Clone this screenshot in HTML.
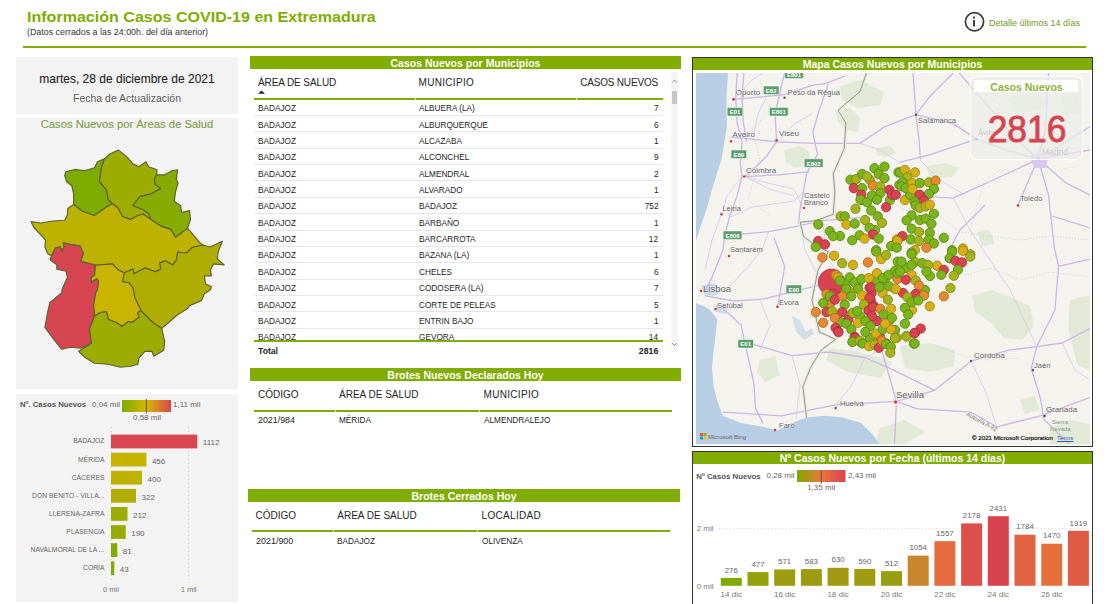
<!DOCTYPE html><html><head><meta charset="utf-8"><style>
html,body{margin:0;padding:0;width:1110px;height:604px;overflow:hidden;background:#fff;position:relative}
body{font-family:"Liberation Sans",sans-serif}
.t{position:absolute;white-space:nowrap;line-height:1}
.r{position:absolute}
svg{position:absolute;left:0;top:0}
</style></head><body>
<div class="t" style="left:27.0px;top:8.80px;font-size:15px;color:#80ad00;font-weight:700;transform:scaleX(1.07);transform-origin:0 0">Información Casos COVID-19 en Extremadura</div>
<div class="t" style="left:27.0px;top:28.47px;font-size:8.9px;color:#333;font-weight:400;">(Datos cerrados a las 24:00h. del día anterior)</div>
<div class="r" style="left:23px;top:46px;width:1063px;height:2px;background:#80ad00;"></div>
<svg width="1110" height="60" style="left:0;top:0"><circle cx="974.5" cy="21.8" r="9.1" fill="none" stroke="#3a3a3a" stroke-width="1.7"/><rect x="973.1" y="20" width="1.9" height="6.5" fill="#3a3a3a"/><rect x="973.1" y="16.5" width="1.9" height="2" fill="#3a3a3a"/></svg>
<div class="t" style="left:989.0px;top:18.98px;font-size:9px;color:#6f9a1e;font-weight:400;">Detalle últimos 14 días</div>
<div class="r" style="left:16px;top:57px;width:222px;height:57px;background:#f3f3f3;"></div>
<div class="t" style="left:-173.0px;width:600px;text-align:center;top:73.24px;font-size:12px;color:#252423;font-weight:400;-webkit-text-stroke:0.1px #252423">martes, 28 de diciembre de 2021</div>
<div class="t" style="left:-173.0px;width:600px;text-align:center;top:93.11px;font-size:10.5px;color:#605e5c;font-weight:400;">Fecha de Actualización</div>
<div class="r" style="left:16px;top:118px;width:222px;height:271px;background:#f3f3f3;"></div>
<div class="t" style="left:-173.0px;width:600px;text-align:center;top:119.48px;font-size:11.25px;color:#7f9f48;font-weight:400;-webkit-text-stroke:0.15px #7f9f48">Casos Nuevos por Áreas de Salud</div>
<div class="r" style="left:16px;top:394px;width:222px;height:208px;background:#f3f3f3;"></div>
<svg width="1110" height="400" style="left:0;top:0"><polygon points="65.7,171.8 75.6,169.4 84.6,170.8 94.5,167.8 97.5,161.8 104.4,158.9 101.5,167.8 99.5,181.7 106.4,189.6 108.4,199.6 112.4,203.5 104.4,208.5 94.5,215.5 82.6,211.5 77.6,207.5 73.6,204.5 73.6,193.6 71.7,185.7 66.7,181.7 64.7,175.7" fill="#7eab00" stroke="#5a6232" stroke-width="1.15" stroke-linejoin="round"/><polygon points="104.4,158.9 110.0,154.0 118.3,149.9 127.0,156.9 132.9,163.8 138.9,166.8 145.9,161.8 148.8,166.8 156.8,169.8 156.8,174.8 154.8,177.7 154.8,183.7 160.7,188.6 151.8,193.6 139.9,196.6 132.9,205.5 142.9,209.5 148.8,213.5 150.8,219.4 143.0,214.0 137.0,216.0 130.2,219.4 122.3,216.5 118.3,208.5 112.4,203.5 108.4,199.6 106.4,189.6 99.5,181.7 101.5,167.8" fill="#9dad00" stroke="#5a6232" stroke-width="1.15" stroke-linejoin="round"/><polygon points="156.8,174.8 164.7,174.8 171.7,170.8 177.6,169.8 176.2,179.7 178.2,182.7 175.6,191.6 174.2,201.6 180.6,205.5 181.6,212.5 189.5,210.5 190.5,219.4 187.6,228.4 175.6,237.3 170.7,229.4 161.7,226.4 150.8,219.4 148.8,213.5 142.9,209.5 132.9,205.5 139.9,196.6 151.8,193.6 160.7,188.6 154.8,183.7 154.8,177.7" fill="#87ab00" stroke="#5a6232" stroke-width="1.15" stroke-linejoin="round"/><polygon points="31.0,221.6 40.9,223.0 52.8,221.0 64.7,220.3 67.4,215.0 67.7,208.5 73.6,204.5 77.6,207.5 82.6,211.5 94.5,215.5 104.4,208.5 112.4,203.5 118.3,208.5 122.3,216.5 130.2,219.4 137.0,216.0 143.0,214.0 150.8,219.4 161.7,226.4 170.7,229.4 175.6,237.3 187.6,228.4 200.5,243.3 203.4,245.2 192.5,247.2 186.6,253.0 177.6,252.0 176.6,259.9 172.7,264.9 165.7,260.9 159.8,262.9 160.7,268.9 155.8,271.8 144.9,267.9 133.9,273.8 132.9,268.9 124.3,272.8 118.3,269.9 112.4,263.9 95.2,265.3 93.9,264.7 80.6,261.4 83.3,253.4 80.0,246.1 68.7,244.1 63.4,242.8 64.1,246.8 62.1,251.4 60.1,246.8 55.5,248.1 51.5,256.0 47.5,253.4 44.9,246.8 45.5,240.2 39.6,233.5 34.3,228.2" fill="#bdb200" stroke="#5a6232" stroke-width="1.15" stroke-linejoin="round"/><polygon points="203.4,245.2 210.0,247.0 222.3,241.3 218.3,251.2 217.3,258.9 224.3,264.9 213.4,263.9 210.4,269.9 211.4,275.8 204.4,275.8 205.4,283.8 211.4,286.7 210.4,289.7 204.4,293.7 201.5,300.6 189.5,305.6 187.5,308.6 176.6,315.5 168.7,322.5 161.7,328.4 152.8,322.5 140.9,310.6 134.9,297.7 132.9,287.7 129.0,282.8 122.3,281.8 124.3,272.8 132.9,268.9 133.9,273.8 144.9,267.9 155.8,271.8 160.7,268.9 159.8,262.9 165.7,260.9 172.7,264.9 176.6,259.9 177.6,252.0 186.6,253.0 192.5,247.2" fill="#afae00" stroke="#5a6232" stroke-width="1.15" stroke-linejoin="round"/><polygon points="95.2,265.3 112.4,263.9 118.3,269.9 124.3,272.8 122.3,281.8 129.0,282.8 132.9,287.7 134.9,297.7 140.9,310.6 137.9,312.5 138.9,317.5 132.0,322.5 128.3,321.5 122.3,326.4 116.3,322.5 108.4,319.5 106.4,311.6 100.5,312.5 94.5,316.0 93.5,305.6 95.5,292.7 97.2,290.5 98.5,281.2 96.5,278.6 91.2,282.5 91.2,277.3 94.5,275.3" fill="#c9b400" stroke="#5a6232" stroke-width="1.15" stroke-linejoin="round"/><polygon points="51.5,256.0 55.5,248.1 60.1,246.8 62.1,251.4 64.1,246.8 63.4,242.8 68.7,244.1 80.0,246.1 83.3,253.4 80.6,261.4 93.9,264.7 95.2,265.3 94.5,275.3 91.2,277.3 91.2,282.5 96.5,278.6 98.5,281.2 97.2,290.5 95.5,292.7 93.5,305.6 94.5,316.0 89.5,329.4 91.5,343.3 80.6,348.3 70.7,347.3 61.7,349.3 53.8,339.4 44.9,327.4 47.8,311.6 49.8,302.6 61.7,292.7 62.1,289.2 67.4,277.3 66.1,271.3 56.8,269.3 56.8,264.7 50.2,260.0" fill="#d84552" stroke="#5a6232" stroke-width="1.15" stroke-linejoin="round"/><polygon points="94.5,316.0 100.5,312.5 106.4,311.6 108.4,319.5 116.3,322.5 122.3,326.4 128.3,321.5 132.0,322.5 138.9,317.5 137.9,312.5 140.9,310.6 152.8,322.5 161.7,328.4 164.7,341.3 163.7,350.3 153.8,356.2 151.8,351.3 144.9,351.3 138.9,358.2 137.9,364.2 131.0,366.2 120.3,367.2 108.4,364.2 94.5,363.2 84.6,357.2 78.6,351.3 91.5,343.3 89.5,329.4" fill="#9dac00" stroke="#5a6232" stroke-width="1.15" stroke-linejoin="round"/></svg>
<div class="t" style="left:20.0px;top:401.44px;font-size:7.75px;color:#555;font-weight:700;">Nº. Casos Nuevos</div>
<div class="t" style="left:92.0px;top:401.23px;font-size:8px;color:#666;font-weight:400;">0,04 mil</div>
<svg width="1110" height="604" style="left:0;top:0"><defs><linearGradient id="lg1" x1="0" x2="1"><stop offset="0" stop-color="#7fab00"/><stop offset="0.5" stop-color="#d6b800"/><stop offset="1" stop-color="#db4450"/></linearGradient></defs><rect x="122" y="400" width="49" height="12" fill="url(#lg1)"/><rect x="145.8" y="399" width="0.9" height="14.5" fill="#444"/></svg>
<div class="t" style="left:173.0px;top:401.23px;font-size:8px;color:#666;font-weight:400;">1,11 mil</div>
<div class="t" style="left:-153.0px;width:600px;text-align:center;top:414.23px;font-size:8px;color:#666;font-weight:400;">0,58 mil</div>
<svg width="1110" height="604" style="left:0;top:0"><line x1="111.2" y1="427" x2="111.2" y2="583" stroke="#c4c4c4" stroke-width="0.9" stroke-dasharray="1 3"/><line x1="188.6" y1="427" x2="188.6" y2="583" stroke="#c4c4c4" stroke-width="0.9" stroke-dasharray="1 3"/><rect x="111" y="434.6" width="86.3" height="13.8" fill="#d94550"/><rect x="111" y="452.7" width="35.4" height="13.8" fill="#c8b400"/><rect x="111" y="470.8" width="31.0" height="13.8" fill="#bfb200"/><rect x="111" y="488.9" width="25.0" height="13.8" fill="#b2ae00"/><rect x="111" y="507.0" width="16.5" height="13.8" fill="#9dad00"/><rect x="111" y="525.1" width="14.7" height="13.8" fill="#98ac00"/><rect x="111" y="543.2" width="6.3" height="13.8" fill="#86ab00"/><rect x="111" y="561.3" width="3.3" height="13.8" fill="#80ab00"/></svg>
<div class="t" style="right:1005.5px;top:438.44px;font-size:6.8px;color:#666;font-weight:400;text-align:right;">BADAJOZ</div>
<div class="t" style="left:202.8px;top:439.43px;font-size:8px;color:#666;font-weight:400;">1112</div>
<div class="t" style="right:1005.5px;top:456.54px;font-size:6.8px;color:#666;font-weight:400;text-align:right;">MÉRIDA</div>
<div class="t" style="left:151.9px;top:457.53px;font-size:8px;color:#666;font-weight:400;">456</div>
<div class="t" style="right:1005.5px;top:474.64px;font-size:6.8px;color:#666;font-weight:400;text-align:right;">CÁCERES</div>
<div class="t" style="left:147.5px;top:475.63px;font-size:8px;color:#666;font-weight:400;">400</div>
<div class="t" style="right:1005.5px;top:492.74px;font-size:6.8px;color:#666;font-weight:400;text-align:right;">DON BENITO - VILLA...</div>
<div class="t" style="left:141.5px;top:493.73px;font-size:8px;color:#666;font-weight:400;">322</div>
<div class="t" style="right:1005.5px;top:510.84px;font-size:6.8px;color:#666;font-weight:400;text-align:right;">LLERENA-ZAFRA</div>
<div class="t" style="left:133.0px;top:511.83px;font-size:8px;color:#666;font-weight:400;">212</div>
<div class="t" style="right:1005.5px;top:528.94px;font-size:6.8px;color:#666;font-weight:400;text-align:right;">PLASENCIA</div>
<div class="t" style="left:131.2px;top:529.93px;font-size:8px;color:#666;font-weight:400;">190</div>
<div class="t" style="right:1005.5px;top:547.04px;font-size:6.8px;color:#666;font-weight:400;text-align:right;">NAVALMORAL DE LA ...</div>
<div class="t" style="left:122.8px;top:548.03px;font-size:8px;color:#666;font-weight:400;">81</div>
<div class="t" style="right:1005.5px;top:565.14px;font-size:6.8px;color:#666;font-weight:400;text-align:right;">CORIA</div>
<div class="t" style="left:119.8px;top:566.13px;font-size:8px;color:#666;font-weight:400;">43</div>
<div class="t" style="left:-189.0px;width:600px;text-align:center;top:585.65px;font-size:7.5px;color:#777;font-weight:400;">0 mil</div>
<div class="t" style="left:-111.4px;width:600px;text-align:center;top:585.65px;font-size:7.5px;color:#777;font-weight:400;">1 mil</div>
<div class="r" style="left:250px;top:56px;width:431px;height:13px;background:#80ad00;"></div>
<div class="t" style="left:165.5px;width:600px;text-align:center;top:57.81px;font-size:10.5px;color:#fff;font-weight:700;">Casos Nuevos por Municipios</div>
<div class="t" style="left:258.0px;top:78.23px;font-size:10px;color:#252423;font-weight:400;letter-spacing:-0.1px">ÁREA DE SALUD</div>
<div class="t" style="left:418.6px;top:78.23px;font-size:10px;color:#252423;font-weight:400;letter-spacing:0.3px">MUNICIPIO</div>
<div class="t" style="right:452.0px;top:78.23px;font-size:10px;color:#252423;font-weight:400;text-align:right;letter-spacing:-0.18px">CASOS NUEVOS</div>
<svg width="1110" height="100" style="left:0;top:0"><path d="M258 93.8 L261.5 90.5 L265 93.8 Z" fill="#252423"/></svg>
<div class="r" style="left:254px;top:97.5px;width:409px;height:2.0px;background:#80ad00;"></div>
<div class="r" style="left:415px;top:97.5px;width:1px;height:2.0px;background:#dfeec0;"></div>
<div class="r" style="left:576px;top:97.5px;width:1px;height:2.0px;background:#dfeec0;"></div>
<div class="t" style="left:258.0px;top:103.22px;font-size:9.9px;color:#252423;font-weight:400;transform:scaleX(0.8339);transform-origin:0 0;">BADAJOZ</div>
<div class="t" style="left:418.6px;top:103.22px;font-size:9.9px;color:#252423;font-weight:400;transform:scaleX(0.8339);transform-origin:0 0;">ALBUERA (LA)</div>
<div class="t" style="right:452.0px;top:103.22px;font-size:9.9px;color:#252423;font-weight:400;text-align:right;transform:scaleX(0.8339);transform-origin:100% 0;">7</div>
<div class="r" style="left:254px;top:115px;width:409px;height:1px;background:#e6e6e6;"></div>
<div class="t" style="left:258.0px;top:119.58px;font-size:9.9px;color:#252423;font-weight:400;transform:scaleX(0.8339);transform-origin:0 0;">BADAJOZ</div>
<div class="t" style="left:418.6px;top:119.58px;font-size:9.9px;color:#252423;font-weight:400;transform:scaleX(0.8339);transform-origin:0 0;">ALBURQUERQUE</div>
<div class="t" style="right:452.0px;top:119.58px;font-size:9.9px;color:#252423;font-weight:400;text-align:right;transform:scaleX(0.8339);transform-origin:100% 0;">6</div>
<div class="r" style="left:254px;top:131px;width:409px;height:1px;background:#e6e6e6;"></div>
<div class="t" style="left:258.0px;top:135.94px;font-size:9.9px;color:#252423;font-weight:400;transform:scaleX(0.8339);transform-origin:0 0;">BADAJOZ</div>
<div class="t" style="left:418.6px;top:135.94px;font-size:9.9px;color:#252423;font-weight:400;transform:scaleX(0.8339);transform-origin:0 0;">ALCAZABA</div>
<div class="t" style="right:452.0px;top:135.94px;font-size:9.9px;color:#252423;font-weight:400;text-align:right;transform:scaleX(0.8339);transform-origin:100% 0;">1</div>
<div class="r" style="left:254px;top:148px;width:409px;height:1px;background:#e6e6e6;"></div>
<div class="t" style="left:258.0px;top:152.30px;font-size:9.9px;color:#252423;font-weight:400;transform:scaleX(0.8339);transform-origin:0 0;">BADAJOZ</div>
<div class="t" style="left:418.6px;top:152.30px;font-size:9.9px;color:#252423;font-weight:400;transform:scaleX(0.8339);transform-origin:0 0;">ALCONCHEL</div>
<div class="t" style="right:452.0px;top:152.30px;font-size:9.9px;color:#252423;font-weight:400;text-align:right;transform:scaleX(0.8339);transform-origin:100% 0;">9</div>
<div class="r" style="left:254px;top:164px;width:409px;height:1px;background:#e6e6e6;"></div>
<div class="t" style="left:258.0px;top:168.66px;font-size:9.9px;color:#252423;font-weight:400;transform:scaleX(0.8339);transform-origin:0 0;">BADAJOZ</div>
<div class="t" style="left:418.6px;top:168.66px;font-size:9.9px;color:#252423;font-weight:400;transform:scaleX(0.8339);transform-origin:0 0;">ALMENDRAL</div>
<div class="t" style="right:452.0px;top:168.66px;font-size:9.9px;color:#252423;font-weight:400;text-align:right;transform:scaleX(0.8339);transform-origin:100% 0;">2</div>
<div class="r" style="left:254px;top:180px;width:409px;height:1px;background:#e6e6e6;"></div>
<div class="t" style="left:258.0px;top:185.02px;font-size:9.9px;color:#252423;font-weight:400;transform:scaleX(0.8339);transform-origin:0 0;">BADAJOZ</div>
<div class="t" style="left:418.6px;top:185.02px;font-size:9.9px;color:#252423;font-weight:400;transform:scaleX(0.8339);transform-origin:0 0;">ALVARADO</div>
<div class="t" style="right:452.0px;top:185.02px;font-size:9.9px;color:#252423;font-weight:400;text-align:right;transform:scaleX(0.8339);transform-origin:100% 0;">1</div>
<div class="r" style="left:254px;top:197px;width:409px;height:1px;background:#e6e6e6;"></div>
<div class="t" style="left:258.0px;top:201.38px;font-size:9.9px;color:#252423;font-weight:400;transform:scaleX(0.8339);transform-origin:0 0;">BADAJOZ</div>
<div class="t" style="left:418.6px;top:201.38px;font-size:9.9px;color:#252423;font-weight:400;transform:scaleX(0.8339);transform-origin:0 0;">BADAJOZ</div>
<div class="t" style="right:452.0px;top:201.38px;font-size:9.9px;color:#252423;font-weight:400;text-align:right;transform:scaleX(0.8339);transform-origin:100% 0;">752</div>
<div class="r" style="left:254px;top:213px;width:409px;height:1px;background:#e6e6e6;"></div>
<div class="t" style="left:258.0px;top:217.74px;font-size:9.9px;color:#252423;font-weight:400;transform:scaleX(0.8339);transform-origin:0 0;">BADAJOZ</div>
<div class="t" style="left:418.6px;top:217.74px;font-size:9.9px;color:#252423;font-weight:400;transform:scaleX(0.8339);transform-origin:0 0;">BARBAÑO</div>
<div class="t" style="right:452.0px;top:217.74px;font-size:9.9px;color:#252423;font-weight:400;text-align:right;transform:scaleX(0.8339);transform-origin:100% 0;">1</div>
<div class="r" style="left:254px;top:230px;width:409px;height:1px;background:#e6e6e6;"></div>
<div class="t" style="left:258.0px;top:234.10px;font-size:9.9px;color:#252423;font-weight:400;transform:scaleX(0.8339);transform-origin:0 0;">BADAJOZ</div>
<div class="t" style="left:418.6px;top:234.10px;font-size:9.9px;color:#252423;font-weight:400;transform:scaleX(0.8339);transform-origin:0 0;">BARCARROTA</div>
<div class="t" style="right:452.0px;top:234.10px;font-size:9.9px;color:#252423;font-weight:400;text-align:right;transform:scaleX(0.8339);transform-origin:100% 0;">12</div>
<div class="r" style="left:254px;top:246px;width:409px;height:1px;background:#e6e6e6;"></div>
<div class="t" style="left:258.0px;top:250.46px;font-size:9.9px;color:#252423;font-weight:400;transform:scaleX(0.8339);transform-origin:0 0;">BADAJOZ</div>
<div class="t" style="left:418.6px;top:250.46px;font-size:9.9px;color:#252423;font-weight:400;transform:scaleX(0.8339);transform-origin:0 0;">BAZANA (LA)</div>
<div class="t" style="right:452.0px;top:250.46px;font-size:9.9px;color:#252423;font-weight:400;text-align:right;transform:scaleX(0.8339);transform-origin:100% 0;">1</div>
<div class="r" style="left:254px;top:262px;width:409px;height:1px;background:#e6e6e6;"></div>
<div class="t" style="left:258.0px;top:266.82px;font-size:9.9px;color:#252423;font-weight:400;transform:scaleX(0.8339);transform-origin:0 0;">BADAJOZ</div>
<div class="t" style="left:418.6px;top:266.82px;font-size:9.9px;color:#252423;font-weight:400;transform:scaleX(0.8339);transform-origin:0 0;">CHELES</div>
<div class="t" style="right:452.0px;top:266.82px;font-size:9.9px;color:#252423;font-weight:400;text-align:right;transform:scaleX(0.8339);transform-origin:100% 0;">6</div>
<div class="r" style="left:254px;top:279px;width:409px;height:1px;background:#e6e6e6;"></div>
<div class="t" style="left:258.0px;top:283.18px;font-size:9.9px;color:#252423;font-weight:400;transform:scaleX(0.8339);transform-origin:0 0;">BADAJOZ</div>
<div class="t" style="left:418.6px;top:283.18px;font-size:9.9px;color:#252423;font-weight:400;transform:scaleX(0.8339);transform-origin:0 0;">CODOSERA (LA)</div>
<div class="t" style="right:452.0px;top:283.18px;font-size:9.9px;color:#252423;font-weight:400;text-align:right;transform:scaleX(0.8339);transform-origin:100% 0;">7</div>
<div class="r" style="left:254px;top:295px;width:409px;height:1px;background:#e6e6e6;"></div>
<div class="t" style="left:258.0px;top:299.54px;font-size:9.9px;color:#252423;font-weight:400;transform:scaleX(0.8339);transform-origin:0 0;">BADAJOZ</div>
<div class="t" style="left:418.6px;top:299.54px;font-size:9.9px;color:#252423;font-weight:400;transform:scaleX(0.8339);transform-origin:0 0;">CORTE DE PELEAS</div>
<div class="t" style="right:452.0px;top:299.54px;font-size:9.9px;color:#252423;font-weight:400;text-align:right;transform:scaleX(0.8339);transform-origin:100% 0;">5</div>
<div class="r" style="left:254px;top:311px;width:409px;height:1px;background:#e6e6e6;"></div>
<div class="t" style="left:258.0px;top:315.90px;font-size:9.9px;color:#252423;font-weight:400;transform:scaleX(0.8339);transform-origin:0 0;">BADAJOZ</div>
<div class="t" style="left:418.6px;top:315.90px;font-size:9.9px;color:#252423;font-weight:400;transform:scaleX(0.8339);transform-origin:0 0;">ENTRIN BAJO</div>
<div class="t" style="right:452.0px;top:315.90px;font-size:9.9px;color:#252423;font-weight:400;text-align:right;transform:scaleX(0.8339);transform-origin:100% 0;">1</div>
<div class="r" style="left:254px;top:328px;width:409px;height:1px;background:#e6e6e6;"></div>
<div class="t" style="left:258.0px;top:332.26px;font-size:9.9px;color:#252423;font-weight:400;transform:scaleX(0.8339);transform-origin:0 0;">BADAJOZ</div>
<div class="t" style="left:418.6px;top:332.26px;font-size:9.9px;color:#252423;font-weight:400;transform:scaleX(0.8339);transform-origin:0 0;">GEVORA</div>
<div class="t" style="right:452.0px;top:332.26px;font-size:9.9px;color:#252423;font-weight:400;text-align:right;transform:scaleX(0.8339);transform-origin:100% 0;">14</div>
<div class="r" style="left:254px;top:340px;width:409px;height:2px;background:#80ad00;"></div>
<div class="t" style="left:258.0px;top:346.37px;font-size:9.6px;color:#252423;font-weight:700;transform:scaleX(0.9002);transform-origin:0 0;">Total</div>
<div class="t" style="right:452.0px;top:346.37px;font-size:9.6px;color:#252423;font-weight:700;text-align:right;transform:scaleX(0.9132);transform-origin:100% 0;">2816</div>
<div class="r" style="left:671px;top:72px;width:7px;height:280px;background:#f4f4f4;"></div>
<div class="r" style="left:672px;top:91px;width:5px;height:13px;background:#c6c6c6;"></div>
<svg width="1110" height="360" style="left:0;top:0"><path d="M672.3 82.5 L674.5 80 L676.7 82.5" fill="none" stroke="#777" stroke-width="0.8"/><path d="M672.3 343 L674.5 345.5 L676.7 343" fill="none" stroke="#777" stroke-width="0.8"/></svg>
<div class="r" style="left:250px;top:368px;width:431px;height:13px;background:#80ad00;"></div>
<div class="t" style="left:165.5px;width:600px;text-align:center;top:369.81px;font-size:10.5px;color:#fff;font-weight:700;">Brotes Nuevos Declarados Hoy</div>
<div class="t" style="left:258.0px;top:389.54px;font-size:10px;color:#252423;font-weight:400;">CÓDIGO</div>
<div class="t" style="left:339.0px;top:389.54px;font-size:10px;color:#252423;font-weight:400;">ÁREA DE SALUD</div>
<div class="t" style="left:483.6px;top:389.54px;font-size:10px;color:#252423;font-weight:400;letter-spacing:0.3px">MUNICIPIO</div>
<div class="r" style="left:254px;top:410px;width:418px;height:2px;background:#80ad00;"></div>
<div class="r" style="left:335px;top:410px;width:1px;height:2px;background:#dfeec0;"></div>
<div class="r" style="left:479px;top:410px;width:1px;height:2px;background:#dfeec0;"></div>
<div class="t" style="left:258.0px;top:415.22px;font-size:9.9px;color:#252423;font-weight:400;transform:scaleX(0.8962);transform-origin:0 0;">2021/984</div>
<div class="t" style="left:339.0px;top:415.22px;font-size:9.9px;color:#252423;font-weight:400;transform:scaleX(0.8339);transform-origin:0 0;">MÉRIDA</div>
<div class="t" style="left:483.6px;top:415.22px;font-size:9.9px;color:#252423;font-weight:400;transform:scaleX(0.8339);transform-origin:0 0;">ALMENDRALEJO</div>
<div class="r" style="left:248px;top:489px;width:432px;height:13px;background:#80ad00;"></div>
<div class="t" style="left:164.0px;width:600px;text-align:center;top:490.81px;font-size:10.5px;color:#fff;font-weight:700;">Brotes Cerrados Hoy</div>
<div class="t" style="left:255.6px;top:510.54px;font-size:10px;color:#252423;font-weight:400;">CÓDIGO</div>
<div class="t" style="left:337.3px;top:510.54px;font-size:10px;color:#252423;font-weight:400;">ÁREA DE SALUD</div>
<div class="t" style="left:481.6px;top:510.54px;font-size:10px;color:#252423;font-weight:400;letter-spacing:0.3px">LOCALIDAD</div>
<div class="r" style="left:252px;top:530px;width:418px;height:2px;background:#80ad00;"></div>
<div class="r" style="left:333px;top:530px;width:1px;height:2px;background:#dfeec0;"></div>
<div class="r" style="left:477px;top:530px;width:1px;height:2px;background:#dfeec0;"></div>
<div class="t" style="left:255.6px;top:536.02px;font-size:9.9px;color:#252423;font-weight:400;transform:scaleX(0.9058);transform-origin:0 0;">2021/900</div>
<div class="t" style="left:337.3px;top:536.02px;font-size:9.9px;color:#252423;font-weight:400;transform:scaleX(0.8339);transform-origin:0 0;">BADAJOZ</div>
<div class="t" style="left:481.6px;top:536.02px;font-size:9.9px;color:#252423;font-weight:400;transform:scaleX(0.8339);transform-origin:0 0;">OLIVENZA</div>
<div class="r" style="left:692px;top:57px;width:401px;height:390px;background:#fff;box-sizing:border-box;border:1px solid #333"></div>
<div class="r" style="left:696px;top:73px;width:394px;height:372px;background:#f5f3ee;"></div>
<svg width="1110" height="604" style="left:0;top:0"><defs><clipPath id="mc"><rect x="696" y="73" width="394" height="371"/></clipPath></defs><g clip-path="url(#mc)"><path d="M784.0 150.0 L800.0 146.0 L810.0 152.0 L808.0 165.0 L795.0 168.0 L786.0 162.0 Z" fill="#e2e9d6"/><path d="M836.0 112.0 L850.0 108.0 L860.0 118.0 L858.0 132.0 L846.0 130.0 L838.0 122.0 Z" fill="#e2e9d6"/><path d="M840.0 86.0 L860.0 80.0 L884.0 92.0 L880.0 105.0 L858.0 108.0 L842.0 100.0 Z" fill="#e2e9d6"/><path d="M876.0 148.0 L890.0 146.0 L897.0 153.0 L886.0 157.0 L877.0 155.0 Z" fill="#e2e9d6"/><path d="M926.0 166.0 L945.0 163.0 L959.0 168.0 L952.0 177.0 L930.0 178.0 Z" fill="#e2e9d6"/><path d="M1007.0 98.0 L1030.0 93.0 L1048.0 100.0 L1042.0 111.0 L1015.0 112.0 Z" fill="#e2e9d6"/><path d="M1060.0 97.0 L1078.0 94.0 L1082.0 112.0 L1066.0 115.0 Z" fill="#e2e9d6"/><path d="M977.0 232.0 L990.0 230.0 L995.0 244.0 L982.0 246.0 Z" fill="#e2e9d6"/><path d="M972.0 296.0 L992.0 290.0 L1012.0 298.0 L1030.0 306.0 L1034.0 326.0 L1022.0 340.0 L1004.0 338.0 L990.0 322.0 L975.0 312.0 Z" fill="#e2e9d6"/><path d="M900.0 346.0 L930.0 343.0 L955.0 350.0 L954.0 366.0 L930.0 372.0 L905.0 368.0 Z" fill="#e2e9d6"/><path d="M830.0 348.0 L860.0 352.0 L892.0 362.0 L880.0 378.0 L848.0 372.0 L826.0 360.0 Z" fill="#e2e9d6"/><path d="M1070.0 300.0 L1090.0 295.0 L1090.0 370.0 L1078.0 366.0 L1068.0 330.0 Z" fill="#e2e9d6"/><path d="M1020.0 400.0 L1035.0 396.0 L1040.0 410.0 L1025.0 414.0 Z" fill="#e2e9d6"/><path d="M760.0 360.0 L775.0 356.0 L780.0 375.0 L765.0 382.0 L757.0 372.0 Z" fill="#e2e9d6"/><path d="M1050.0 428.0 L1070.0 420.0 L1090.0 424.0 L1090.0 444.0 L1050.0 444.0 Z" fill="#e2e9d6"/><path d="M880.0 428.0 L905.0 420.0 L925.0 432.0 L905.0 444.0 L875.0 444.0 Z" fill="#e2e9d6"/><path d="M696.0 73.0 L728.0 73.0 L726.4 99.7 L727.0 126.0 L721.5 159.0 L713.0 186.0 L706.6 209.0 L700.0 228.0 L696.3 240.0 L696.0 241.0 Z" fill="#b8cee4"/><path d="M696.0 303.0 L704.6 306.5 L710.0 310.1 L717.3 319.3 L715.5 335.6 L713.7 350.2 L711.9 368.4 L713.7 386.6 L717.3 401.2 L722.8 415.8 L741.0 423.1 L762.9 426.7 L777.4 430.4 L792.0 423.1 L806.6 417.6 L824.8 415.8 L843.0 417.6 L861.2 423.1 L872.1 434.0 L879.4 444.0 L696.0 444.0 Z" fill="#b8cee4"/><path d="M701 286 L712 283 L722 290 L715 296 L704 294 Z" fill="#b8cee4" opacity="0.7"/><path d="M716 304 L728 306 L726 314 L716 312 Z" fill="#b8cee4" opacity="0.7"/><path d="M792 316 L800 320 L806 332 L812 328 L814 334 L804 340 L796 332 Z" fill="#b8cee4" opacity="0.55"/><path d="M760.0 80.0 L770.0 110.0 L752.0 130.0 L760.0 160.0 L748.0 200.0 L770.0 215.0" fill="none" stroke="#cfcfcf" stroke-width="0.8" stroke-dasharray="1.2 1.8"/><path d="M880.0 195.0 L905.0 210.0 L935.0 212.0 L960.0 232.0 L990.0 236.0 L1020.0 240.0 L1050.0 236.0 L1090.0 240.0" fill="none" stroke="#cfcfcf" stroke-width="0.8" stroke-dasharray="1.2 1.8"/><path d="M965.0 275.0 L990.0 268.0 L1020.0 280.0 L1050.0 272.0 L1090.0 277.0" fill="none" stroke="#cfcfcf" stroke-width="0.8" stroke-dasharray="1.2 1.8"/><path d="M970.0 230.0 L985.0 180.0 L1000.0 170.0 L1040.0 175.0 L1080.0 165.0" fill="none" stroke="#cfcfcf" stroke-width="0.8" stroke-dasharray="1.2 1.8"/><path d="M935.0 345.0 L960.0 355.0 L990.0 360.0 L1020.0 358.0" fill="none" stroke="#cfcfcf" stroke-width="0.8" stroke-dasharray="1.2 1.8"/><path d="M980.0 90.0 L1000.0 105.0 L1010.0 130.0" fill="none" stroke="#cfcfcf" stroke-width="0.8" stroke-dasharray="1.2 1.8"/><path d="M734.0 99.4 L753.0 79.0 L763.0 73.0" fill="none" stroke="#d9cdee" stroke-width="0.9" stroke-linejoin="round"/><path d="M753.0 137.0 L758.0 114.0 L766.0 98.0" fill="none" stroke="#d9cdee" stroke-width="0.9" stroke-linejoin="round"/><path d="M778.2 141.9 L794.0 124.0 L812.8 113.5" fill="none" stroke="#d9cdee" stroke-width="0.9" stroke-linejoin="round"/><path d="M745.1 176.5 L769.0 189.0 L793.9 196.0" fill="none" stroke="#d9cdee" stroke-width="0.9" stroke-linejoin="round"/><path d="M729.4 217.4 L752.0 207.0 L793.9 201.0 L803.0 192.0" fill="none" stroke="#d9cdee" stroke-width="0.9" stroke-linejoin="round"/><path d="M742.0 176.5 L727.0 196.0 L722.4 214.0" fill="none" stroke="#d9cdee" stroke-width="0.9" stroke-linejoin="round"/><path d="M768.7 231.6 L762.0 250.0 L745.0 270.0 L726.0 290.0" fill="none" stroke="#d9cdee" stroke-width="0.9" stroke-linejoin="round"/><path d="M822.2 220.6 L828.0 260.0 L840.0 272.0" fill="none" stroke="#d9cdee" stroke-width="0.9" stroke-linejoin="round"/><path d="M760.0 300.0 L770.0 325.0 L760.0 350.0" fill="none" stroke="#d9cdee" stroke-width="0.9" stroke-linejoin="round"/><path d="M792.0 355.7 L800.0 385.0 L796.0 418.0" fill="none" stroke="#d9cdee" stroke-width="0.9" stroke-linejoin="round"/><path d="M835.7 404.9 L852.0 385.0 L864.9 357.5" fill="none" stroke="#d9cdee" stroke-width="0.9" stroke-linejoin="round"/><path d="M864.9 357.5 L881.8 350.3" fill="none" stroke="#d9cdee" stroke-width="0.9" stroke-linejoin="round"/><path d="M953.2 198.1 L970.0 230.0 L990.0 260.0 L1010.0 290.0 L1036.7 346.6" fill="none" stroke="#d9cdee" stroke-width="0.9" stroke-linejoin="round"/><path d="M1062.2 343.0 L1075.0 370.0 L1090.0 380.0" fill="none" stroke="#d9cdee" stroke-width="0.9" stroke-linejoin="round"/><path d="M971.1 361.2 L985.0 390.0 L996.6 426.8" fill="none" stroke="#d9cdee" stroke-width="0.9" stroke-linejoin="round"/><path d="M920.0 160.0 L940.0 180.0 L965.0 195.0" fill="none" stroke="#d9cdee" stroke-width="0.9" stroke-linejoin="round"/><path d="M860.0 143.4 L880.0 150.0 L899.6 162.3" fill="none" stroke="#d9cdee" stroke-width="0.9" stroke-linejoin="round"/><path d="M746.0 177.0 L768.0 183.0 L794.0 189.0 L803.0 208.0" fill="none" stroke="#d9cdee" stroke-width="0.9" stroke-linejoin="round"/><path d="M721.5 214.3 L712.0 240.0 L705.0 270.0" fill="none" stroke="#d9cdee" stroke-width="0.9" stroke-linejoin="round"/><path d="M800.2 222.2 L805.0 250.0 L815.0 270.0 L821.0 284.6" fill="none" stroke="#d9cdee" stroke-width="0.9" stroke-linejoin="round"/><path d="M737.2 73.0 L735.7 97.8 L737.2 123.0 L742.0 141.9 L740.4 163.9 L742.0 176.5 L737.2 195.4 L729.4 217.4 L724.6 236.3 L723.0 250.0 L711.9 277.4 L704.6 291.9" fill="none" stroke="#cbb7e5" stroke-width="1.3" stroke-linejoin="round"/><path d="M744.0 73.0 L742.0 97.8 L743.5 123.0 L746.7 141.9" fill="none" stroke="#cbb7e5" stroke-width="1.3" stroke-linejoin="round"/><path d="M731.0 137.1 L778.2 141.9 L812.8 143.4 L860.0 143.4 L884.7 126.6 L916.0 114.7" fill="none" stroke="#cbb7e5" stroke-width="1.3" stroke-linejoin="round"/><path d="M734.0 99.4 L768.7 96.2 L784.5 94.6 L812.8 85.2 L825.4 83.6 L845.0 76.0" fill="none" stroke="#cbb7e5" stroke-width="1.3" stroke-linejoin="round"/><path d="M784.5 73.0 L775.0 113.5 L776.6 141.9 L765.6 157.6 L745.1 176.5" fill="none" stroke="#cbb7e5" stroke-width="1.3" stroke-linejoin="round"/><path d="M828.5 83.6 L819.1 110.4 L812.8 132.4 L817.5 154.5 L806.5 173.4 L803.4 192.2 L800.2 208.0 L798.6 223.7" fill="none" stroke="#cbb7e5" stroke-width="1.3" stroke-linejoin="round"/><path d="M734.0 234.8 L768.7 231.6 L793.9 226.9 L822.2 220.6 L860.0 217.4" fill="none" stroke="#cbb7e5" stroke-width="1.3" stroke-linejoin="round"/><path d="M745.1 176.5 L778.2 174.9 L809.6 171.8" fill="none" stroke="#cbb7e5" stroke-width="1.3" stroke-linejoin="round"/><path d="M704.6 295.6 L733.7 301.0 L762.9 299.2 L799.3 290.1 L821.1 284.6" fill="none" stroke="#cbb7e5" stroke-width="1.3" stroke-linejoin="round"/><path d="M722.8 308.3 L741.0 324.7 L746.5 350.2 L753.8 383.0 L755.6 408.5 L762.9 423.1" fill="none" stroke="#cbb7e5" stroke-width="1.3" stroke-linejoin="round"/><path d="M748.3 342.9 L792.0 355.7 L828.4 352.0 L864.9 357.5 L890.0 368.4 L934.7 390.3" fill="none" stroke="#cbb7e5" stroke-width="1.3" stroke-linejoin="round"/><path d="M722.8 412.1 L781.1 415.8 L835.7 404.9 L896.4 401.3" fill="none" stroke="#cbb7e5" stroke-width="1.3" stroke-linejoin="round"/><path d="M777.4 308.3 L784.7 266.4 L773.8 237.3" fill="none" stroke="#cbb7e5" stroke-width="1.3" stroke-linejoin="round"/><path d="M913.0 73.0 L916.0 114.7 L918.9 138.5 L920.4 159.4" fill="none" stroke="#cbb7e5" stroke-width="1.3" stroke-linejoin="round"/><path d="M916.0 114.7 L929.4 96.8 L953.2 73.0" fill="none" stroke="#cbb7e5" stroke-width="1.3" stroke-linejoin="round"/><path d="M916.0 114.7 L953.2 123.6 L976.4 139.1 L1006.8 150.4 L1038.0 158.8" fill="none" stroke="#cbb7e5" stroke-width="1.3" stroke-linejoin="round"/><path d="M976.4 139.1 L929.4 154.9 L899.6 162.3" fill="none" stroke="#cbb7e5" stroke-width="1.3" stroke-linejoin="round"/><path d="M902.6 195.1 L953.2 198.1 L1018.7 168.3 L1038.0 158.8" fill="none" stroke="#cbb7e5" stroke-width="1.3" stroke-linejoin="round"/><path d="M1038.0 158.8 L1045.5 129.6 L1048.5 73.0" fill="none" stroke="#cbb7e5" stroke-width="1.3" stroke-linejoin="round"/><path d="M1038.0 158.8 L1018.7 141.5 L959.2 73.0" fill="none" stroke="#cbb7e5" stroke-width="1.3" stroke-linejoin="round"/><path d="M1038.0 158.8 L1066.4 141.5 L1090.0 126.6" fill="none" stroke="#cbb7e5" stroke-width="1.3" stroke-linejoin="round"/><path d="M1038.0 158.8 L1090.0 150.0" fill="none" stroke="#cbb7e5" stroke-width="1.3" stroke-linejoin="round"/><path d="M1038.0 158.8 L1048.5 195.1 L1054.5 248.7 L1058.6 266.4 L1054.9 310.2 L1036.7 346.6 L1031.2 368.5 L1040.3 397.6 L1044.0 419.5 L1069.5 444.0" fill="none" stroke="#cbb7e5" stroke-width="1.3" stroke-linejoin="round"/><path d="M1038.0 158.8 L1066.4 183.2 L1090.0 195.1" fill="none" stroke="#cbb7e5" stroke-width="1.3" stroke-linejoin="round"/><path d="M1038.0 158.8 L1024.7 189.2 L1018.0 205.5" fill="none" stroke="#cbb7e5" stroke-width="1.3" stroke-linejoin="round"/><path d="M896.4 401.3 L934.7 390.3 L971.1 361.2 L1007.6 350.3 L1036.7 346.6 L1062.2 343.0 L1090.0 328.4" fill="none" stroke="#cbb7e5" stroke-width="1.3" stroke-linejoin="round"/><path d="M1058.6 266.4 L1090.0 259.2" fill="none" stroke="#cbb7e5" stroke-width="1.3" stroke-linejoin="round"/><path d="M896.4 401.3 L916.4 408.6 L971.1 412.2 L996.6 426.8 L1040.3 415.9 L1090.0 397.6" fill="none" stroke="#cbb7e5" stroke-width="1.3" stroke-linejoin="round"/><path d="M896.4 401.3 L894.6 444.0" fill="none" stroke="#cbb7e5" stroke-width="1.3" stroke-linejoin="round"/><path d="M881.8 350.3 L896.4 401.3" fill="none" stroke="#cbb7e5" stroke-width="1.3" stroke-linejoin="round"/><path d="M985.0 205.0 L960.0 230.0 L945.0 258.0" fill="none" stroke="#cbb7e5" stroke-width="1.3" stroke-linejoin="round"/><path d="M1052.0 216.0 L1090.0 228.0" fill="none" stroke="#cbb7e5" stroke-width="1.3" stroke-linejoin="round"/><path d="M1030 156 L1040 152 L1048 158 L1046 168 L1034 168 Z" fill="#d8c8ee"/><path d="M866.5 73.0 L860.0 91.5 L838.0 110.4 L845.9 123.0 L844.3 148.2 L833.3 173.4 L834.8 192.2 L833.3 214.3 L816.0 220.6 L800.2 222.2 L803.4 236.3 L816.0 245.8 L828.4 251.9 L818.0 270.0 L812.0 300.0 L819.3 332.0 L835.7 339.3 L821.1 350.2 L810.2 368.4 L802.9 386.6 L806.6 417.6" fill="none" stroke="#e3ead8" stroke-width="3"/><path d="M866.5 73.0 L860.0 91.5 L838.0 110.4 L845.9 123.0 L844.3 148.2 L833.3 173.4 L834.8 192.2 L833.3 214.3 L816.0 220.6 L800.2 222.2 L803.4 236.3 L816.0 245.8 L828.4 251.9 L818.0 270.0 L812.0 300.0 L819.3 332.0 L835.7 339.3 L821.1 350.2 L810.2 368.4 L802.9 386.6 L806.6 417.6" fill="none" stroke="#8f8f8f" stroke-width="0.9"/><circle cx="733.5" cy="99.4" r="1.3" fill="#d2373c"/><circle cx="731" cy="141.2" r="1.3" fill="#d2373c"/><circle cx="776.6" cy="140.3" r="1.3" fill="#d2373c"/><circle cx="744.2" cy="176.5" r="1.3" fill="#d2373c"/><circle cx="721.5" cy="214.3" r="1.3" fill="#d2373c"/><circle cx="729" cy="256" r="1.3" fill="#d2373c"/><circle cx="701" cy="291" r="1.3" fill="#d2373c"/><circle cx="715.5" cy="309" r="1.3" fill="#d2373c"/><circle cx="777.4" cy="306.8" r="1.3" fill="#d2373c"/><circle cx="775" cy="430" r="1.3" fill="#d2373c"/><circle cx="1038" cy="158.8" r="1.3" fill="#d2373c"/><circle cx="1018" cy="205.5" r="1.3" fill="#d2373c"/><circle cx="804" cy="208" r="1.3" fill="#d2373c"/><circle cx="784.5" cy="97.8" r="1.2" fill="#555"/><circle cx="916" cy="114.7" r="1.2" fill="#555"/><circle cx="976.4" cy="139.1" r="1.2" fill="#555"/><circle cx="835.7" cy="408" r="1.2" fill="#555"/><circle cx="971" cy="361" r="1.2" fill="#555"/><circle cx="1033" cy="370" r="1.2" fill="#555"/><circle cx="1044.6" cy="416" r="1.2" fill="#555"/><circle cx="895.6" cy="402" r="2" fill="#d2373c" stroke="#fff" stroke-width="0.6"/><rect x="784.6" y="70.0" width="18.8" height="8.5" rx="1" fill="#5b9e6d" stroke="#fff" stroke-width="0.5"/><text x="794.0" y="76.9" font-size="6" font-family="Liberation Sans" fill="#fff" text-anchor="middle" font-weight="700">E801</text><rect x="763.4" y="86.0" width="15.6" height="8.5" rx="1" fill="#5b9e6d" stroke="#fff" stroke-width="0.5"/><text x="771.2" y="92.9" font-size="6" font-family="Liberation Sans" fill="#fff" text-anchor="middle" font-weight="700">E82</text><rect x="727.2" y="107.5" width="15.6" height="8.5" rx="1" fill="#5b9e6d" stroke="#fff" stroke-width="0.5"/><text x="735.0" y="114.4" font-size="6" font-family="Liberation Sans" fill="#fff" text-anchor="middle" font-weight="700">E01</text><rect x="769.4" y="107.5" width="18.8" height="8.5" rx="1" fill="#5b9e6d" stroke="#fff" stroke-width="0.5"/><text x="778.8" y="114.4" font-size="6" font-family="Liberation Sans" fill="#fff" text-anchor="middle" font-weight="700">E801</text><rect x="731.0" y="150.0" width="15.6" height="8.5" rx="1" fill="#5b9e6d" stroke="#fff" stroke-width="0.5"/><text x="738.8" y="156.9" font-size="6" font-family="Liberation Sans" fill="#fff" text-anchor="middle" font-weight="700">E80</text><rect x="804.3" y="158.8" width="18.8" height="8.5" rx="1" fill="#5b9e6d" stroke="#fff" stroke-width="0.5"/><text x="813.7" y="165.7" font-size="6" font-family="Liberation Sans" fill="#fff" text-anchor="middle" font-weight="700">E802</text><rect x="723.1" y="230.9" width="18.8" height="8.5" rx="1" fill="#5b9e6d" stroke="#fff" stroke-width="0.5"/><text x="732.5" y="237.8" font-size="6" font-family="Liberation Sans" fill="#fff" text-anchor="middle" font-weight="700">E806</text><rect x="786.0" y="284.9" width="15.6" height="8.5" rx="1" fill="#5b9e6d" stroke="#fff" stroke-width="0.5"/><text x="793.8" y="291.8" font-size="6" font-family="Liberation Sans" fill="#fff" text-anchor="middle" font-weight="700">E90</text><rect x="737.9" y="339.5" width="15.6" height="8.5" rx="1" fill="#5b9e6d" stroke="#fff" stroke-width="0.5"/><text x="745.7" y="346.4" font-size="6" font-family="Liberation Sans" fill="#fff" text-anchor="middle" font-weight="700">E01</text><circle cx="831.5" cy="282.3" r="13.2" fill="#d9434f" stroke="#a8303a" stroke-width="0.8"/><circle cx="869.6" cy="287.8" r="4.65" fill="#d9434f" stroke="#a8303a" stroke-width="0.9"/><circle cx="871.6" cy="292.8" r="4.65" fill="#d9434f" stroke="#a8303a" stroke-width="0.9"/><circle cx="870.6" cy="299.7" r="4.65" fill="#d9434f" stroke="#a8303a" stroke-width="0.9"/><circle cx="873.6" cy="305.7" r="4.65" fill="#d9434f" stroke="#a8303a" stroke-width="0.9"/><circle cx="868.6" cy="310.6" r="4.65" fill="#d9434f" stroke="#a8303a" stroke-width="0.9"/><circle cx="871.6" cy="315.6" r="4.65" fill="#d9434f" stroke="#a8303a" stroke-width="0.9"/><circle cx="835.8" cy="274.9" r="4.65" fill="#e58a2e" stroke="#b0661c" stroke-width="0.9"/><circle cx="832.8" cy="293.8" r="4.65" fill="#d9434f" stroke="#a8303a" stroke-width="0.9"/><circle cx="829.9" cy="303.7" r="4.65" fill="#e58a2e" stroke="#b0661c" stroke-width="0.9"/><circle cx="851.7" cy="313.6" r="4.65" fill="#a8b31c" stroke="#7f8a14" stroke-width="0.9"/><circle cx="875.5" cy="281.8" r="4.65" fill="#7cb41c" stroke="#5b8a12" stroke-width="0.9"/><circle cx="884.5" cy="279.9" r="4.65" fill="#7cb41c" stroke="#5b8a12" stroke-width="0.9"/><circle cx="882.5" cy="292.8" r="4.65" fill="#d6ae16" stroke="#a58510" stroke-width="0.9"/><circle cx="897.4" cy="278.9" r="4.65" fill="#e58a2e" stroke="#b0661c" stroke-width="0.9"/><circle cx="858" cy="284" r="4.65" fill="#a8b31c" stroke="#7f8a14" stroke-width="0.9"/><circle cx="850" cy="292" r="4.65" fill="#d6ae16" stroke="#a58510" stroke-width="0.9"/><circle cx="846" cy="283" r="4.65" fill="#7cb41c" stroke="#5b8a12" stroke-width="0.9"/><circle cx="866" cy="300" r="4.65" fill="#e58a2e" stroke="#b0661c" stroke-width="0.9"/><circle cx="877" cy="321" r="4.65" fill="#d9434f" stroke="#a8303a" stroke-width="0.9"/><circle cx="860" cy="316" r="4.65" fill="#7cb41c" stroke="#5b8a12" stroke-width="0.9"/><circle cx="848" cy="320" r="4.65" fill="#d9434f" stroke="#a8303a" stroke-width="0.9"/><circle cx="840" cy="322" r="4.65" fill="#7cb41c" stroke="#5b8a12" stroke-width="0.9"/><circle cx="906" cy="268" r="4.65" fill="#7cb41c" stroke="#5b8a12" stroke-width="0.9"/><circle cx="915" cy="262" r="4.65" fill="#a8b31c" stroke="#7f8a14" stroke-width="0.9"/><circle cx="903" cy="293" r="4.65" fill="#d9434f" stroke="#a8303a" stroke-width="0.9"/><circle cx="925" cy="290" r="4.65" fill="#7cb41c" stroke="#5b8a12" stroke-width="0.9"/><circle cx="912" cy="310" r="4.65" fill="#d6ae16" stroke="#a58510" stroke-width="0.9"/><circle cx="930" cy="276" r="4.65" fill="#7cb41c" stroke="#5b8a12" stroke-width="0.9"/><circle cx="890" cy="320" r="4.65" fill="#e58a2e" stroke="#b0661c" stroke-width="0.9"/><circle cx="895" cy="330" r="4.65" fill="#7cb41c" stroke="#5b8a12" stroke-width="0.9"/><circle cx="880" cy="337" r="4.65" fill="#d9434f" stroke="#a8303a" stroke-width="0.9"/><circle cx="870" cy="338" r="4.65" fill="#7cb41c" stroke="#5b8a12" stroke-width="0.9"/><circle cx="862" cy="200" r="4.65" fill="#7cb41c" stroke="#5b8a12" stroke-width="0.9"/><circle cx="870" cy="180" r="4.65" fill="#a8b31c" stroke="#7f8a14" stroke-width="0.9"/><circle cx="890" cy="200" r="4.65" fill="#7cb41c" stroke="#5b8a12" stroke-width="0.9"/><circle cx="905" cy="200" r="4.65" fill="#d6ae16" stroke="#a58510" stroke-width="0.9"/><circle cx="910" cy="195" r="4.65" fill="#7cb41c" stroke="#5b8a12" stroke-width="0.9"/><circle cx="875" cy="230" r="4.65" fill="#7cb41c" stroke="#5b8a12" stroke-width="0.9"/><circle cx="865" cy="220" r="4.65" fill="#a8b31c" stroke="#7f8a14" stroke-width="0.9"/><circle cx="920" cy="220" r="4.65" fill="#7cb41c" stroke="#5b8a12" stroke-width="0.9"/><circle cx="840" cy="236" r="4.65" fill="#7cb41c" stroke="#5b8a12" stroke-width="0.9"/><circle cx="850.5" cy="179.8" r="4.65" fill="#7cb41c" stroke="#5b8a12" stroke-width="0.9"/><circle cx="856.3" cy="179" r="4.65" fill="#a8b31c" stroke="#7f8a14" stroke-width="0.9"/><circle cx="862.1" cy="174" r="4.65" fill="#7cb41c" stroke="#5b8a12" stroke-width="0.9"/><circle cx="867.1" cy="176.5" r="4.65" fill="#a8b31c" stroke="#7f8a14" stroke-width="0.9"/><circle cx="853.8" cy="188.1" r="4.65" fill="#d9434f" stroke="#a8303a" stroke-width="0.9"/><circle cx="862.1" cy="188.1" r="4.65" fill="#7cb41c" stroke="#5b8a12" stroke-width="0.9"/><circle cx="861.3" cy="194.7" r="4.65" fill="#d9434f" stroke="#a8303a" stroke-width="0.9"/><circle cx="860.5" cy="199.7" r="4.65" fill="#7cb41c" stroke="#5b8a12" stroke-width="0.9"/><circle cx="867.1" cy="202.2" r="4.65" fill="#7cb41c" stroke="#5b8a12" stroke-width="0.9"/><circle cx="872" cy="195.6" r="4.65" fill="#7cb41c" stroke="#5b8a12" stroke-width="0.9"/><circle cx="872.9" cy="185.6" r="4.65" fill="#e58a2e" stroke="#b0661c" stroke-width="0.9"/><circle cx="874.5" cy="168.2" r="4.65" fill="#7cb41c" stroke="#5b8a12" stroke-width="0.9"/><circle cx="884.5" cy="166.6" r="4.65" fill="#7cb41c" stroke="#5b8a12" stroke-width="0.9"/><circle cx="878.7" cy="174" r="4.65" fill="#7cb41c" stroke="#5b8a12" stroke-width="0.9"/><circle cx="884.5" cy="178.2" r="4.65" fill="#7cb41c" stroke="#5b8a12" stroke-width="0.9"/><circle cx="880.3" cy="186.5" r="4.65" fill="#a8b31c" stroke="#7f8a14" stroke-width="0.9"/><circle cx="880.3" cy="193.1" r="4.65" fill="#7cb41c" stroke="#5b8a12" stroke-width="0.9"/><circle cx="877" cy="199.7" r="4.65" fill="#7cb41c" stroke="#5b8a12" stroke-width="0.9"/><circle cx="889.4" cy="189.8" r="4.65" fill="#d9434f" stroke="#a8303a" stroke-width="0.9"/><circle cx="891.9" cy="194.7" r="4.65" fill="#d9434f" stroke="#a8303a" stroke-width="0.9"/><circle cx="886.1" cy="207.2" r="4.65" fill="#d9434f" stroke="#a8303a" stroke-width="0.9"/><circle cx="898.5" cy="172.4" r="4.65" fill="#7cb41c" stroke="#5b8a12" stroke-width="0.9"/><circle cx="899.4" cy="184.8" r="4.65" fill="#7cb41c" stroke="#5b8a12" stroke-width="0.9"/><circle cx="855.5" cy="208.8" r="4.65" fill="#a8b31c" stroke="#7f8a14" stroke-width="0.9"/><circle cx="871.2" cy="210.5" r="4.65" fill="#7cb41c" stroke="#5b8a12" stroke-width="0.9"/><circle cx="877.8" cy="216.3" r="4.65" fill="#7cb41c" stroke="#5b8a12" stroke-width="0.9"/><circle cx="882" cy="222.9" r="4.65" fill="#a8b31c" stroke="#7f8a14" stroke-width="0.9"/><circle cx="840.6" cy="216.3" r="4.65" fill="#a8b31c" stroke="#7f8a14" stroke-width="0.9"/><circle cx="844.7" cy="216.3" r="4.65" fill="#7cb41c" stroke="#5b8a12" stroke-width="0.9"/><circle cx="846.4" cy="224.5" r="4.65" fill="#d6ae16" stroke="#a58510" stroke-width="0.9"/><circle cx="854.7" cy="223.7" r="4.65" fill="#7cb41c" stroke="#5b8a12" stroke-width="0.9"/><circle cx="818.2" cy="224.5" r="4.65" fill="#7cb41c" stroke="#5b8a12" stroke-width="0.9"/><circle cx="829.8" cy="231.2" r="4.65" fill="#7cb41c" stroke="#5b8a12" stroke-width="0.9"/><circle cx="833.1" cy="236.1" r="4.65" fill="#7cb41c" stroke="#5b8a12" stroke-width="0.9"/><circle cx="869.6" cy="227.8" r="4.65" fill="#7cb41c" stroke="#5b8a12" stroke-width="0.9"/><circle cx="872.9" cy="234.5" r="4.65" fill="#d9434f" stroke="#a8303a" stroke-width="0.9"/><circle cx="859.6" cy="235.3" r="4.65" fill="#7cb41c" stroke="#5b8a12" stroke-width="0.9"/><circle cx="864.6" cy="238.6" r="4.65" fill="#d6ae16" stroke="#a58510" stroke-width="0.9"/><circle cx="852.2" cy="240.3" r="4.65" fill="#7cb41c" stroke="#5b8a12" stroke-width="0.9"/><circle cx="878.7" cy="238.6" r="4.65" fill="#7cb41c" stroke="#5b8a12" stroke-width="0.9"/><circle cx="818.2" cy="241.1" r="4.65" fill="#d9434f" stroke="#a8303a" stroke-width="0.9"/><circle cx="824.9" cy="244.4" r="4.65" fill="#d9434f" stroke="#a8303a" stroke-width="0.9"/><circle cx="815.8" cy="246.9" r="4.65" fill="#7cb41c" stroke="#5b8a12" stroke-width="0.9"/><circle cx="891.1" cy="246.1" r="4.65" fill="#7cb41c" stroke="#5b8a12" stroke-width="0.9"/><circle cx="876.2" cy="250.2" r="4.65" fill="#7cb41c" stroke="#5b8a12" stroke-width="0.9"/><circle cx="896.9" cy="239.4" r="4.65" fill="#d6ae16" stroke="#a58510" stroke-width="0.9"/><circle cx="900" cy="172.4" r="4.65" fill="#7cb41c" stroke="#5b8a12" stroke-width="0.9"/><circle cx="904.9" cy="169.9" r="4.65" fill="#d6ae16" stroke="#a58510" stroke-width="0.9"/><circle cx="914.9" cy="172.4" r="4.65" fill="#d6ae16" stroke="#a58510" stroke-width="0.9"/><circle cx="907.4" cy="177.3" r="4.65" fill="#a8b31c" stroke="#7f8a14" stroke-width="0.9"/><circle cx="902.4" cy="182.3" r="4.65" fill="#7cb41c" stroke="#5b8a12" stroke-width="0.9"/><circle cx="901.6" cy="186.4" r="4.65" fill="#7cb41c" stroke="#5b8a12" stroke-width="0.9"/><circle cx="905.8" cy="188.1" r="4.65" fill="#7cb41c" stroke="#5b8a12" stroke-width="0.9"/><circle cx="912.4" cy="183.1" r="4.65" fill="#d6ae16" stroke="#a58510" stroke-width="0.9"/><circle cx="912.4" cy="188.9" r="4.65" fill="#d6ae16" stroke="#a58510" stroke-width="0.9"/><circle cx="919.8" cy="183.1" r="4.65" fill="#7cb41c" stroke="#5b8a12" stroke-width="0.9"/><circle cx="928.9" cy="182.3" r="4.65" fill="#a8b31c" stroke="#7f8a14" stroke-width="0.9"/><circle cx="935.5" cy="180.7" r="4.65" fill="#e58a2e" stroke="#b0661c" stroke-width="0.9"/><circle cx="933.9" cy="188.9" r="4.65" fill="#7cb41c" stroke="#5b8a12" stroke-width="0.9"/><circle cx="928.9" cy="193.9" r="4.65" fill="#7cb41c" stroke="#5b8a12" stroke-width="0.9"/><circle cx="919.8" cy="194.7" r="4.65" fill="#d9434f" stroke="#a8303a" stroke-width="0.9"/><circle cx="924" cy="200.5" r="4.65" fill="#d9434f" stroke="#a8303a" stroke-width="0.9"/><circle cx="914.9" cy="202.2" r="4.65" fill="#7cb41c" stroke="#5b8a12" stroke-width="0.9"/><circle cx="915.7" cy="205.5" r="4.65" fill="#7cb41c" stroke="#5b8a12" stroke-width="0.9"/><circle cx="919.8" cy="208" r="4.65" fill="#a8b31c" stroke="#7f8a14" stroke-width="0.9"/><circle cx="925.6" cy="206.3" r="4.65" fill="#a8b31c" stroke="#7f8a14" stroke-width="0.9"/><circle cx="929.8" cy="204.7" r="4.65" fill="#d6ae16" stroke="#a58510" stroke-width="0.9"/><circle cx="895.8" cy="194.7" r="4.65" fill="#d9434f" stroke="#a8303a" stroke-width="0.9"/><circle cx="911.6" cy="215.4" r="4.65" fill="#7cb41c" stroke="#5b8a12" stroke-width="0.9"/><circle cx="906.6" cy="220.4" r="4.65" fill="#7cb41c" stroke="#5b8a12" stroke-width="0.9"/><circle cx="925.6" cy="218.7" r="4.65" fill="#7cb41c" stroke="#5b8a12" stroke-width="0.9"/><circle cx="933.9" cy="213.8" r="4.65" fill="#7cb41c" stroke="#5b8a12" stroke-width="0.9"/><circle cx="931.4" cy="223.7" r="4.65" fill="#7cb41c" stroke="#5b8a12" stroke-width="0.9"/><circle cx="911.6" cy="228.7" r="4.65" fill="#7cb41c" stroke="#5b8a12" stroke-width="0.9"/><circle cx="919" cy="232" r="4.65" fill="#a8b31c" stroke="#7f8a14" stroke-width="0.9"/><circle cx="929.8" cy="232.8" r="4.65" fill="#7cb41c" stroke="#5b8a12" stroke-width="0.9"/><circle cx="902.4" cy="236.1" r="4.65" fill="#d9434f" stroke="#a8303a" stroke-width="0.9"/><circle cx="897.5" cy="241.1" r="4.65" fill="#d6ae16" stroke="#a58510" stroke-width="0.9"/><circle cx="910.7" cy="239.4" r="4.65" fill="#7cb41c" stroke="#5b8a12" stroke-width="0.9"/><circle cx="919" cy="241.1" r="4.65" fill="#a8b31c" stroke="#7f8a14" stroke-width="0.9"/><circle cx="928.9" cy="239.4" r="4.65" fill="#7cb41c" stroke="#5b8a12" stroke-width="0.9"/><circle cx="933.9" cy="243.5" r="4.65" fill="#7cb41c" stroke="#5b8a12" stroke-width="0.9"/><circle cx="943.8" cy="237.8" r="4.65" fill="#7cb41c" stroke="#5b8a12" stroke-width="0.9"/><circle cx="926.4" cy="247.7" r="4.65" fill="#e58a2e" stroke="#b0661c" stroke-width="0.9"/><circle cx="914.9" cy="250.2" r="4.65" fill="#d6ae16" stroke="#a58510" stroke-width="0.9"/><circle cx="911.6" cy="252.6" r="4.65" fill="#7cb41c" stroke="#5b8a12" stroke-width="0.9"/><circle cx="896.7" cy="247.7" r="4.65" fill="#7cb41c" stroke="#5b8a12" stroke-width="0.9"/><circle cx="952.1" cy="250.2" r="4.65" fill="#7cb41c" stroke="#5b8a12" stroke-width="0.9"/><circle cx="962.9" cy="248.5" r="4.65" fill="#d6ae16" stroke="#a58510" stroke-width="0.9"/><circle cx="970.3" cy="254.3" r="4.65" fill="#a8b31c" stroke="#7f8a14" stroke-width="0.9"/><circle cx="822.4" cy="257.4" r="4.65" fill="#e58a2e" stroke="#b0661c" stroke-width="0.9"/><circle cx="834" cy="255.8" r="4.65" fill="#d6ae16" stroke="#a58510" stroke-width="0.9"/><circle cx="842.2" cy="263.2" r="4.65" fill="#a8b31c" stroke="#7f8a14" stroke-width="0.9"/><circle cx="853" cy="264.9" r="4.65" fill="#d6ae16" stroke="#a58510" stroke-width="0.9"/><circle cx="867.9" cy="262.4" r="4.65" fill="#e58a2e" stroke="#b0661c" stroke-width="0.9"/><circle cx="876.2" cy="251.7" r="4.65" fill="#7cb41c" stroke="#5b8a12" stroke-width="0.9"/><circle cx="881.1" cy="259.1" r="4.65" fill="#d6ae16" stroke="#a58510" stroke-width="0.9"/><circle cx="886.1" cy="255" r="4.65" fill="#a8b31c" stroke="#7f8a14" stroke-width="0.9"/><circle cx="897.7" cy="261.6" r="4.65" fill="#7cb41c" stroke="#5b8a12" stroke-width="0.9"/><circle cx="838.1" cy="277.3" r="4.65" fill="#d6ae16" stroke="#a58510" stroke-width="0.9"/><circle cx="839.8" cy="280.6" r="4.65" fill="#7cb41c" stroke="#5b8a12" stroke-width="0.9"/><circle cx="849.7" cy="277.3" r="4.65" fill="#7cb41c" stroke="#5b8a12" stroke-width="0.9"/><circle cx="854.7" cy="282.3" r="4.65" fill="#7cb41c" stroke="#5b8a12" stroke-width="0.9"/><circle cx="861.3" cy="279" r="4.65" fill="#7cb41c" stroke="#5b8a12" stroke-width="0.9"/><circle cx="868.7" cy="278.1" r="4.65" fill="#d6ae16" stroke="#a58510" stroke-width="0.9"/><circle cx="871.2" cy="287.2" r="4.65" fill="#d9434f" stroke="#a8303a" stroke-width="0.9"/><circle cx="877" cy="273.2" r="4.65" fill="#d6ae16" stroke="#a58510" stroke-width="0.9"/><circle cx="882.8" cy="278.1" r="4.65" fill="#7cb41c" stroke="#5b8a12" stroke-width="0.9"/><circle cx="879.5" cy="287.2" r="4.65" fill="#7cb41c" stroke="#5b8a12" stroke-width="0.9"/><circle cx="888.6" cy="274.8" r="4.65" fill="#7cb41c" stroke="#5b8a12" stroke-width="0.9"/><circle cx="895.2" cy="270.7" r="4.65" fill="#7cb41c" stroke="#5b8a12" stroke-width="0.9"/><circle cx="897.7" cy="273.2" r="4.65" fill="#7cb41c" stroke="#5b8a12" stroke-width="0.9"/><circle cx="889.4" cy="286.4" r="4.65" fill="#7cb41c" stroke="#5b8a12" stroke-width="0.9"/><circle cx="895.2" cy="288.9" r="4.65" fill="#d6ae16" stroke="#a58510" stroke-width="0.9"/><circle cx="846.4" cy="288.9" r="4.65" fill="#7cb41c" stroke="#5b8a12" stroke-width="0.9"/><circle cx="858" cy="288.9" r="4.65" fill="#7cb41c" stroke="#5b8a12" stroke-width="0.9"/><circle cx="826.5" cy="293.9" r="4.65" fill="#e58a2e" stroke="#b0661c" stroke-width="0.9"/><circle cx="829.8" cy="296.3" r="4.65" fill="#7cb41c" stroke="#5b8a12" stroke-width="0.9"/><circle cx="823.2" cy="303" r="4.65" fill="#7cb41c" stroke="#5b8a12" stroke-width="0.9"/><circle cx="834.8" cy="299.7" r="4.65" fill="#d9434f" stroke="#a8303a" stroke-width="0.9"/><circle cx="843.1" cy="296.3" r="4.65" fill="#e58a2e" stroke="#b0661c" stroke-width="0.9"/><circle cx="851.3" cy="296.3" r="4.65" fill="#7cb41c" stroke="#5b8a12" stroke-width="0.9"/><circle cx="862.1" cy="295.5" r="4.65" fill="#d6ae16" stroke="#a58510" stroke-width="0.9"/><circle cx="869.5" cy="298" r="4.65" fill="#d9434f" stroke="#a8303a" stroke-width="0.9"/><circle cx="887.7" cy="299.7" r="4.65" fill="#a8b31c" stroke="#7f8a14" stroke-width="0.9"/><circle cx="844.7" cy="304.6" r="4.65" fill="#7cb41c" stroke="#5b8a12" stroke-width="0.9"/><circle cx="863.8" cy="304.6" r="4.65" fill="#a8b31c" stroke="#7f8a14" stroke-width="0.9"/><circle cx="815.8" cy="312.1" r="4.65" fill="#e58a2e" stroke="#b0661c" stroke-width="0.9"/><circle cx="826.5" cy="312.1" r="4.65" fill="#d9434f" stroke="#a8303a" stroke-width="0.9"/><circle cx="832.3" cy="311.2" r="4.65" fill="#a8b31c" stroke="#7f8a14" stroke-width="0.9"/><circle cx="842.2" cy="312.1" r="4.65" fill="#d9434f" stroke="#a8303a" stroke-width="0.9"/><circle cx="853" cy="312.9" r="4.65" fill="#a8b31c" stroke="#7f8a14" stroke-width="0.9"/><circle cx="857.1" cy="311.2" r="4.65" fill="#7cb41c" stroke="#5b8a12" stroke-width="0.9"/><circle cx="868.7" cy="310.4" r="4.65" fill="#d9434f" stroke="#a8303a" stroke-width="0.9"/><circle cx="872.9" cy="307.1" r="4.65" fill="#d9434f" stroke="#a8303a" stroke-width="0.9"/><circle cx="880.3" cy="308.8" r="4.65" fill="#e58a2e" stroke="#b0661c" stroke-width="0.9"/><circle cx="891.1" cy="308.8" r="4.65" fill="#d6ae16" stroke="#a58510" stroke-width="0.9"/><circle cx="834.8" cy="317.9" r="4.65" fill="#e58a2e" stroke="#b0661c" stroke-width="0.9"/><circle cx="872" cy="316.2" r="4.65" fill="#d9434f" stroke="#a8303a" stroke-width="0.9"/><circle cx="883.6" cy="314.5" r="4.65" fill="#7cb41c" stroke="#5b8a12" stroke-width="0.9"/><circle cx="891.9" cy="317.9" r="4.65" fill="#7cb41c" stroke="#5b8a12" stroke-width="0.9"/><circle cx="823.2" cy="322.8" r="4.65" fill="#e58a2e" stroke="#b0661c" stroke-width="0.9"/><circle cx="835.6" cy="327.8" r="4.65" fill="#d9434f" stroke="#a8303a" stroke-width="0.9"/><circle cx="838.1" cy="331.1" r="4.65" fill="#d9434f" stroke="#a8303a" stroke-width="0.9"/><circle cx="846.4" cy="323.7" r="4.65" fill="#7cb41c" stroke="#5b8a12" stroke-width="0.9"/><circle cx="851.3" cy="329.4" r="4.65" fill="#7cb41c" stroke="#5b8a12" stroke-width="0.9"/><circle cx="858" cy="322.8" r="4.65" fill="#d6ae16" stroke="#a58510" stroke-width="0.9"/><circle cx="865.4" cy="321.2" r="4.65" fill="#7cb41c" stroke="#5b8a12" stroke-width="0.9"/><circle cx="870.4" cy="326.1" r="4.65" fill="#7cb41c" stroke="#5b8a12" stroke-width="0.9"/><circle cx="865.4" cy="331.9" r="4.65" fill="#7cb41c" stroke="#5b8a12" stroke-width="0.9"/><circle cx="876.2" cy="333.6" r="4.65" fill="#d6ae16" stroke="#a58510" stroke-width="0.9"/><circle cx="882.8" cy="329.4" r="4.65" fill="#7cb41c" stroke="#5b8a12" stroke-width="0.9"/><circle cx="891.1" cy="329.4" r="4.65" fill="#d6ae16" stroke="#a58510" stroke-width="0.9"/><circle cx="885.3" cy="323.7" r="4.65" fill="#d6ae16" stroke="#a58510" stroke-width="0.9"/><circle cx="895.2" cy="337.7" r="4.65" fill="#a8b31c" stroke="#7f8a14" stroke-width="0.9"/><circle cx="854.7" cy="336.9" r="4.65" fill="#d9434f" stroke="#a8303a" stroke-width="0.9"/><circle cx="853" cy="341" r="4.65" fill="#7cb41c" stroke="#5b8a12" stroke-width="0.9"/><circle cx="861.3" cy="342.7" r="4.65" fill="#7cb41c" stroke="#5b8a12" stroke-width="0.9"/><circle cx="872.9" cy="344.3" r="4.65" fill="#d6ae16" stroke="#a58510" stroke-width="0.9"/><circle cx="881.1" cy="340.2" r="4.65" fill="#e58a2e" stroke="#b0661c" stroke-width="0.9"/><circle cx="886.1" cy="343.5" r="4.65" fill="#7cb41c" stroke="#5b8a12" stroke-width="0.9"/><circle cx="911.6" cy="254.1" r="4.65" fill="#7cb41c" stroke="#5b8a12" stroke-width="0.9"/><circle cx="952.1" cy="251.7" r="4.65" fill="#7cb41c" stroke="#5b8a12" stroke-width="0.9"/><circle cx="962.9" cy="250.8" r="4.65" fill="#d6ae16" stroke="#a58510" stroke-width="0.9"/><circle cx="970.3" cy="256.6" r="4.65" fill="#a8b31c" stroke="#7f8a14" stroke-width="0.9"/><circle cx="901.6" cy="261.6" r="4.65" fill="#7cb41c" stroke="#5b8a12" stroke-width="0.9"/><circle cx="911.6" cy="264.9" r="4.65" fill="#7cb41c" stroke="#5b8a12" stroke-width="0.9"/><circle cx="922.3" cy="263.2" r="4.65" fill="#7cb41c" stroke="#5b8a12" stroke-width="0.9"/><circle cx="928.1" cy="264.9" r="4.65" fill="#a8b31c" stroke="#7f8a14" stroke-width="0.9"/><circle cx="937.2" cy="265.7" r="4.65" fill="#d6ae16" stroke="#a58510" stroke-width="0.9"/><circle cx="943.8" cy="269.9" r="4.65" fill="#d9434f" stroke="#a8303a" stroke-width="0.9"/><circle cx="949.6" cy="258.3" r="4.65" fill="#7cb41c" stroke="#5b8a12" stroke-width="0.9"/><circle cx="955.4" cy="260.8" r="4.65" fill="#d9434f" stroke="#a8303a" stroke-width="0.9"/><circle cx="962" cy="262.4" r="4.65" fill="#d9434f" stroke="#a8303a" stroke-width="0.9"/><circle cx="957.9" cy="269.9" r="4.65" fill="#7cb41c" stroke="#5b8a12" stroke-width="0.9"/><circle cx="953.8" cy="275.7" r="4.65" fill="#a8b31c" stroke="#7f8a14" stroke-width="0.9"/><circle cx="941.3" cy="274.8" r="4.65" fill="#7cb41c" stroke="#5b8a12" stroke-width="0.9"/><circle cx="900" cy="271.5" r="4.65" fill="#7cb41c" stroke="#5b8a12" stroke-width="0.9"/><circle cx="926.4" cy="271.5" r="4.65" fill="#7cb41c" stroke="#5b8a12" stroke-width="0.9"/><circle cx="911.6" cy="274.8" r="4.65" fill="#d6ae16" stroke="#a58510" stroke-width="0.9"/><circle cx="905.8" cy="279.8" r="4.65" fill="#d9434f" stroke="#a8303a" stroke-width="0.9"/><circle cx="915.7" cy="280.6" r="4.65" fill="#a8b31c" stroke="#7f8a14" stroke-width="0.9"/><circle cx="919" cy="285.6" r="4.65" fill="#e58a2e" stroke="#b0661c" stroke-width="0.9"/><circle cx="895.8" cy="288.9" r="4.65" fill="#d6ae16" stroke="#a58510" stroke-width="0.9"/><circle cx="950.4" cy="288.1" r="4.65" fill="#a8b31c" stroke="#7f8a14" stroke-width="0.9"/><circle cx="943.8" cy="296.3" r="4.65" fill="#e58a2e" stroke="#b0661c" stroke-width="0.9"/><circle cx="915.7" cy="293.9" r="4.65" fill="#d9434f" stroke="#a8303a" stroke-width="0.9"/><circle cx="907.4" cy="297.2" r="4.65" fill="#a8b31c" stroke="#7f8a14" stroke-width="0.9"/><circle cx="924" cy="295.5" r="4.65" fill="#e58a2e" stroke="#b0661c" stroke-width="0.9"/><circle cx="911.6" cy="302.1" r="4.65" fill="#7cb41c" stroke="#5b8a12" stroke-width="0.9"/><circle cx="918.2" cy="300.5" r="4.65" fill="#7cb41c" stroke="#5b8a12" stroke-width="0.9"/><circle cx="929.8" cy="306.3" r="4.65" fill="#d6ae16" stroke="#a58510" stroke-width="0.9"/><circle cx="904.9" cy="307.9" r="4.65" fill="#7cb41c" stroke="#5b8a12" stroke-width="0.9"/><circle cx="908.2" cy="314.5" r="4.65" fill="#7cb41c" stroke="#5b8a12" stroke-width="0.9"/><circle cx="904.9" cy="323.7" r="4.65" fill="#7cb41c" stroke="#5b8a12" stroke-width="0.9"/><circle cx="920.7" cy="328.6" r="4.65" fill="#d9434f" stroke="#a8303a" stroke-width="0.9"/><circle cx="914.9" cy="332.8" r="4.65" fill="#d9434f" stroke="#a8303a" stroke-width="0.9"/><circle cx="906.6" cy="336.1" r="4.65" fill="#7cb41c" stroke="#5b8a12" stroke-width="0.9"/><circle cx="896.7" cy="337.7" r="4.65" fill="#a8b31c" stroke="#7f8a14" stroke-width="0.9"/><circle cx="914" cy="343.5" r="4.65" fill="#7cb41c" stroke="#5b8a12" stroke-width="0.9"/><circle cx="838.4" cy="332.2" r="4.65" fill="#d9434f" stroke="#a8303a" stroke-width="0.9"/><circle cx="855.1" cy="338.1" r="4.65" fill="#d9434f" stroke="#a8303a" stroke-width="0.9"/><circle cx="852.4" cy="341.9" r="4.65" fill="#7cb41c" stroke="#5b8a12" stroke-width="0.9"/><circle cx="860" cy="340.8" r="4.65" fill="#a8b31c" stroke="#7f8a14" stroke-width="0.9"/><circle cx="862.7" cy="343.5" r="4.65" fill="#7cb41c" stroke="#5b8a12" stroke-width="0.9"/><circle cx="869.2" cy="346.2" r="4.65" fill="#d6ae16" stroke="#a58510" stroke-width="0.9"/><circle cx="874.6" cy="344.6" r="4.65" fill="#a8b31c" stroke="#7f8a14" stroke-width="0.9"/><circle cx="878.9" cy="347.8" r="4.65" fill="#d9434f" stroke="#a8303a" stroke-width="0.9"/><circle cx="882.2" cy="340.8" r="4.65" fill="#e58a2e" stroke="#b0661c" stroke-width="0.9"/><circle cx="886" cy="344.1" r="4.65" fill="#7cb41c" stroke="#5b8a12" stroke-width="0.9"/><circle cx="890.8" cy="346.8" r="4.65" fill="#7cb41c" stroke="#5b8a12" stroke-width="0.9"/><circle cx="890.3" cy="352.7" r="4.65" fill="#a8b31c" stroke="#7f8a14" stroke-width="0.9"/><circle cx="895.1" cy="338.1" r="4.65" fill="#a8b31c" stroke="#7f8a14" stroke-width="0.9"/><circle cx="906.5" cy="336.5" r="4.65" fill="#a8b31c" stroke="#7f8a14" stroke-width="0.9"/><circle cx="914.6" cy="333.2" r="4.65" fill="#d9434f" stroke="#a8303a" stroke-width="0.9"/><circle cx="914.6" cy="343.5" r="4.65" fill="#7cb41c" stroke="#5b8a12" stroke-width="0.9"/></g></svg>
<div class="t" style="left:735.7px;top:89.43px;font-size:8px;color:#5f5f5f;font-weight:400;text-shadow:0 0 1px #fff,0 0 1px #fff">Oporto</div>
<div class="t" style="left:787.6px;top:88.87px;font-size:7.6px;color:#5f5f5f;font-weight:400;text-shadow:0 0 1px #fff,0 0 1px #fff">Peso da Régua</div>
<div class="t" style="left:732.5px;top:131.23px;font-size:8px;color:#5f5f5f;font-weight:400;text-shadow:0 0 1px #fff,0 0 1px #fff">Aveiro</div>
<div class="t" style="left:779.0px;top:129.73px;font-size:8px;color:#5f5f5f;font-weight:400;text-shadow:0 0 1px #fff,0 0 1px #fff">Viseu</div>
<div class="t" style="left:746.0px;top:166.63px;font-size:8px;color:#5f5f5f;font-weight:400;text-shadow:0 0 1px #fff,0 0 1px #fff">Coimbra</div>
<div class="t" style="left:804.0px;top:191.57px;font-size:7.6px;color:#5f5f5f;font-weight:400;text-shadow:0 0 1px #fff,0 0 1px #fff">Castelo</div>
<div class="t" style="left:804.0px;top:198.57px;font-size:7.6px;color:#5f5f5f;font-weight:400;text-shadow:0 0 1px #fff,0 0 1px #fff">Branco</div>
<div class="t" style="left:722.4px;top:205.37px;font-size:7.6px;color:#5f5f5f;font-weight:400;text-shadow:0 0 1px #fff,0 0 1px #fff">Leiria</div>
<div class="t" style="left:730.0px;top:245.57px;font-size:7.6px;color:#5f5f5f;font-weight:400;text-shadow:0 0 1px #fff,0 0 1px #fff">Santarém</div>
<div class="t" style="left:703.0px;top:283.96px;font-size:9.5px;color:#5f5f5f;font-weight:400;text-shadow:0 0 1px #fff,0 0 1px #fff">Lisboa</div>
<div class="t" style="left:717.0px;top:301.57px;font-size:7.6px;color:#5f5f5f;font-weight:400;text-shadow:0 0 1px #fff,0 0 1px #fff">Setúbal</div>
<div class="t" style="left:779.0px;top:298.57px;font-size:7.6px;color:#5f5f5f;font-weight:400;text-shadow:0 0 1px #fff,0 0 1px #fff">Evora</div>
<div class="t" style="left:779.0px;top:421.57px;font-size:7.6px;color:#5f5f5f;font-weight:400;text-shadow:0 0 1px #fff,0 0 1px #fff">Faro</div>
<div class="t" style="left:840.0px;top:399.57px;font-size:7.6px;color:#5f5f5f;font-weight:400;text-shadow:0 0 1px #fff,0 0 1px #fff">Huelva</div>
<div class="t" style="left:896.0px;top:389.96px;font-size:9.5px;color:#5f5f5f;font-weight:400;text-shadow:0 0 1px #fff,0 0 1px #fff">Sevilla</div>
<div class="t" style="left:974.0px;top:352.23px;font-size:8px;color:#5f5f5f;font-weight:400;text-shadow:0 0 1px #fff,0 0 1px #fff">Córdoba</div>
<div class="t" style="left:1034.0px;top:361.57px;font-size:7.6px;color:#5f5f5f;font-weight:400;text-shadow:0 0 1px #fff,0 0 1px #fff">Jaén</div>
<div class="t" style="left:1046.0px;top:406.23px;font-size:8px;color:#5f5f5f;font-weight:400;text-shadow:0 0 1px #fff,0 0 1px #fff">Granada</div>
<div class="t" style="left:1052.0px;top:418.92px;font-size:6px;color:#6a8a6a;font-weight:400;text-shadow:0 0 1px #fff,0 0 1px #fff">Sierra</div>
<div class="t" style="left:1050.0px;top:425.92px;font-size:6px;color:#6a8a6a;font-weight:400;text-shadow:0 0 1px #fff,0 0 1px #fff">Nevada</div>
<div class="t" style="left:918.0px;top:116.57px;font-size:7.6px;color:#5f5f5f;font-weight:400;text-shadow:0 0 1px #fff,0 0 1px #fff">Salamanca</div>
<div class="t" style="left:978.0px;top:129.07px;font-size:7.6px;color:#5f5f5f;font-weight:400;text-shadow:0 0 1px #fff,0 0 1px #fff">Ávila</div>
<div class="t" style="left:1042.0px;top:148.30px;font-size:8.5px;color:#5f5f5f;font-weight:400;text-shadow:0 0 1px #fff,0 0 1px #fff">Madrid</div>
<div class="t" style="left:1020.0px;top:194.57px;font-size:7.6px;color:#5f5f5f;font-weight:400;text-shadow:0 0 1px #fff,0 0 1px #fff">Toledo</div>
<div class="t" style="left:968px;top:411px;font-size:6px;color:#777;transform:rotate(28deg);transform-origin:0 0">Autovía A-92</div>
<svg width="1110" height="604" style="left:0;top:0"><rect x="700" y="433" width="3" height="3" fill="#f25022"/><rect x="703.5" y="433" width="3" height="3" fill="#7fba00"/><rect x="700" y="436.5" width="3" height="3" fill="#00a4ef"/><rect x="703.5" y="436.5" width="3" height="3" fill="#ffb900"/></svg>
<div class="t" style="left:708.0px;top:433.92px;font-size:6px;color:#666;font-weight:400;">Microsoft Bing</div>
<div class="t" style="left:972.0px;top:434.75px;font-size:6.2px;color:#111;font-weight:400;-webkit-text-stroke:0.2px #111">© 2021 Microsoft Corporation</div>
<div class="t" style="left:1057.0px;top:434.92px;font-size:6px;color:#2a5db0;font-weight:400;text-decoration:underline">Terms</div>
<div class="r" style="left:970px;top:76px;width:113px;height:84px;background:rgba(236,236,234,0.72);border-radius:7px;box-sizing:border-box;border:1px solid rgba(255,255,255,0.9)"></div>
<div class="r" style="left:974px;top:80px;width:104px;height:12px;background:#fff;"></div>
<div class="t" style="left:726.5px;width:600px;text-align:center;top:81.81px;font-size:10.5px;color:#8db33a;font-weight:700;">Casos Nuevos</div>
<div class="t" style="left:726.7px;width:600px;text-align:center;top:112.33px;font-size:36px;color:#d64550;font-weight:400;transform:scaleX(0.982);-webkit-text-stroke:0.8px #d64550">2816</div>
<div class="r" style="left:693px;top:58px;width:399px;height:12px;background:#80ad00;"></div>
<div class="t" style="left:592.5px;width:600px;text-align:center;top:58.81px;font-size:10.5px;color:#fff;font-weight:700;">Mapa Casos Nuevos por Municipios</div>
<div class="r" style="left:692px;top:451px;width:401px;height:159px;background:#fff;box-sizing:border-box;border:1px solid #333"></div>
<div class="r" style="left:693px;top:452px;width:399px;height:12px;background:#80ad00;"></div>
<div class="t" style="left:592.5px;width:600px;text-align:center;top:452.81px;font-size:10.5px;color:#fff;font-weight:700;">Nº Casos Nuevos por Fecha (últimos 14 días)</div>
<div class="t" style="left:696.3px;top:472.60px;font-size:7.8px;color:#555;font-weight:700;">Nº Casos Nuevos</div>
<div class="t" style="left:766.5px;top:472.43px;font-size:8px;color:#666;font-weight:400;">0,28 mil</div>
<svg width="1110" height="604" style="left:0;top:0"><defs><linearGradient id="lg2" x1="0" x2="1"><stop offset="0" stop-color="#7fab00"/><stop offset="0.5" stop-color="#e8763a"/><stop offset="1" stop-color="#d9434f"/></linearGradient></defs><rect x="797" y="470" width="48.5" height="12" fill="url(#lg2)"/><rect x="820.7" y="470" width="0.9" height="14" fill="#555"/></svg>
<div class="t" style="left:848.0px;top:472.43px;font-size:8px;color:#666;font-weight:400;">2,43 mil</div>
<div class="t" style="left:521.2px;width:600px;text-align:center;top:484.23px;font-size:8px;color:#666;font-weight:400;">1,35 mil</div>
<div class="t" style="left:696.7px;top:524.83px;font-size:8px;color:#777;font-weight:400;">2 mil</div>
<div class="t" style="left:696.7px;top:583.23px;font-size:8px;color:#777;font-weight:400;">0 mil</div>
<svg width="1110" height="604" style="left:0;top:0"><line x1="719" y1="528.4" x2="1090" y2="528.4" stroke="#c8c8c8" stroke-width="0.8" stroke-dasharray="1 2.5"/><rect x="720.8" y="577.9" width="21" height="7.9" fill="rgb(127, 171, 0)"/><rect x="747.5" y="572.1" width="21" height="13.7" fill="rgb(147, 161, 11)"/><rect x="774.2" y="569.4" width="21" height="16.4" fill="rgb(156, 156, 16)"/><rect x="800.9" y="569.1" width="21" height="16.7" fill="rgb(157, 156, 17)"/><rect x="827.6" y="567.8" width="21" height="18.0" fill="rgb(162, 154, 19)"/><rect x="854.3" y="568.9" width="21" height="16.9" fill="rgb(158, 156, 17)"/><rect x="881.0" y="571.1" width="21" height="14.7" fill="rgb(150, 159, 13)"/><rect x="907.7" y="555.6" width="21" height="30.2" fill="rgb(203, 133, 42)"/><rect x="934.4" y="541.2" width="21" height="44.6" fill="rgb(229, 108, 62)"/><rect x="961.1" y="523.4" width="21" height="62.4" fill="rgb(221, 79, 74)"/><rect x="987.8" y="516.2" width="21" height="69.6" fill="rgb(217, 67, 79)"/><rect x="1014.5" y="534.7" width="21" height="51.1" fill="rgb(226, 98, 66)"/><rect x="1041.2" y="543.7" width="21" height="42.1" fill="rgb(230, 112, 60)"/><rect x="1067.9" y="530.8" width="21" height="55.0" fill="rgb(224, 91, 69)"/></svg>
<div class="t" style="left:431.3px;width:600px;text-align:center;top:566.61px;font-size:7.9px;color:#666;font-weight:400;">276</div>
<div class="t" style="left:431.3px;width:600px;text-align:center;top:590.53px;font-size:8px;color:#777;font-weight:400;">14 dic</div>
<div class="t" style="left:458.0px;width:600px;text-align:center;top:560.85px;font-size:7.9px;color:#666;font-weight:400;">477</div>
<div class="t" style="left:484.7px;width:600px;text-align:center;top:558.15px;font-size:7.9px;color:#666;font-weight:400;">571</div>
<div class="t" style="left:484.7px;width:600px;text-align:center;top:590.53px;font-size:8px;color:#777;font-weight:400;">16 dic</div>
<div class="t" style="left:511.4px;width:600px;text-align:center;top:557.81px;font-size:7.9px;color:#666;font-weight:400;">583</div>
<div class="t" style="left:538.1px;width:600px;text-align:center;top:556.46px;font-size:7.9px;color:#666;font-weight:400;">630</div>
<div class="t" style="left:538.1px;width:600px;text-align:center;top:590.53px;font-size:8px;color:#777;font-weight:400;">18 dic</div>
<div class="t" style="left:564.8px;width:600px;text-align:center;top:557.61px;font-size:7.9px;color:#666;font-weight:400;">590</div>
<div class="t" style="left:591.5px;width:600px;text-align:center;top:559.84px;font-size:7.9px;color:#666;font-weight:400;">512</div>
<div class="t" style="left:591.5px;width:600px;text-align:center;top:590.53px;font-size:8px;color:#777;font-weight:400;">20 dic</div>
<div class="t" style="left:618.2px;width:600px;text-align:center;top:544.32px;font-size:7.9px;color:#666;font-weight:400;">1054</div>
<div class="t" style="left:644.9px;width:600px;text-align:center;top:529.90px;font-size:7.9px;color:#666;font-weight:400;">1557</div>
<div class="t" style="left:644.9px;width:600px;text-align:center;top:590.53px;font-size:8px;color:#777;font-weight:400;">22 dic</div>
<div class="t" style="left:671.6px;width:600px;text-align:center;top:512.11px;font-size:7.9px;color:#666;font-weight:400;">2178</div>
<div class="t" style="left:698.3px;width:600px;text-align:center;top:504.86px;font-size:7.9px;color:#666;font-weight:400;">2431</div>
<div class="t" style="left:698.3px;width:600px;text-align:center;top:590.53px;font-size:8px;color:#777;font-weight:400;">24 dic</div>
<div class="t" style="left:725.0px;width:600px;text-align:center;top:523.40px;font-size:7.9px;color:#666;font-weight:400;">1784</div>
<div class="t" style="left:751.7px;width:600px;text-align:center;top:532.40px;font-size:7.9px;color:#666;font-weight:400;">1470</div>
<div class="t" style="left:751.7px;width:600px;text-align:center;top:590.53px;font-size:8px;color:#777;font-weight:400;">26 dic</div>
<div class="t" style="left:778.4px;width:600px;text-align:center;top:519.53px;font-size:7.9px;color:#666;font-weight:400;">1919</div>
</body></html>
